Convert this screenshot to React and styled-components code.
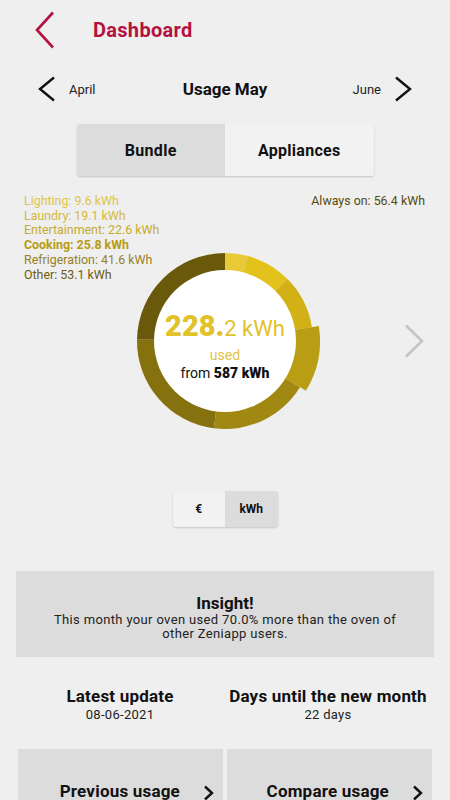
import React, { useState } from "react";
import styled, { createGlobalStyle } from "styled-components";

const GlobalStyle = createGlobalStyle`
  html, body {
    margin: 0;
    padding: 0;
    background: #efefef;
  }
  body {
    font-family: Roboto, "Liberation Sans", sans-serif;
    color: #111;
  }
`;

const segments = [
  { label: "Lighting", value: 9.6, color: "#e8ca36", text: "#e0c545" },
  { label: "Laundry", value: 19.1, color: "#e3c21b", text: "#d6b938" },
  { label: "Entertainment", value: 22.6, color: "#d2b116", text: "#c6ab2e" },
  { label: "Cooking", value: 25.8, color: "#b99d13", text: "#b89b12", active: true },
  { label: "Refrigeration", value: 41.6, color: "#a08812", text: "#968125" },
  { label: "Other", value: 53.1, color: "#85710e", text: "#6c5c14" },
  { label: "Always on", value: 56.4, color: "#6a590b", text: "#574a0e" },
];

const total = segments.reduce((s, x) => s + x.value, 0);

// point on circle, angle measured clockwise from 12 o'clock
const polar = (r, a) => [100 + r * Math.sin(a), 100 - r * Math.cos(a)];

const arcPath = (a0, a1, ro, ri) => {
  const large = a1 - a0 > Math.PI ? 1 : 0;
  const [x0, y0] = polar(ro, a0);
  const [x1, y1] = polar(ro, a1);
  const [x2, y2] = polar(ri, a1);
  const [x3, y3] = polar(ri, a0);
  return `M${x0} ${y0} A${ro} ${ro} 0 ${large} 1 ${x1} ${y1} L${x2} ${y2} A${ri} ${ri} 0 ${large} 0 ${x3} ${y3} Z`;
};

function Donut() {
  let acc = 0;
  return (
    <svg width="200" height="200" viewBox="0 0 200 200">
      {segments.map((s) => {
        const a0 = (acc / total) * Math.PI * 2;
        acc += s.value;
        const a1 = (acc / total) * Math.PI * 2;
        return (
          <path
            key={s.label}
            d={arcPath(a0, a1, s.active ? 95 : 88, 70)}
            fill={s.color}
          />
        );
      })}
      <circle cx="100" cy="100" r="71" fill="#fff" />
    </svg>
  );
}

const Chevron = ({ dir = "left", color = "#111", w = 18, h = 26, stroke = 2.4 }) => (
  <svg width={w} height={h} viewBox={`0 0 ${w} ${h}`} fill="none">
    {dir === "left" ? (
      <polyline
        points={`${w - 2},1.5 2,${h / 2} ${w - 2},${h - 1.5}`}
        stroke={color}
        strokeWidth={stroke}
      />
    ) : (
      <polyline
        points={`2,1.5 ${w - 2},${h / 2} 2,${h - 1.5}`}
        stroke={color}
        strokeWidth={stroke}
      />
    )}
  </svg>
);

export default function App() {
  const [tab, setTab] = useState("bundle");
  const [unit, setUnit] = useState("kwh");
  const always = segments[segments.length - 1];

  return (
    <Page>
      <GlobalStyle />
      <Header>
        <BackButton>
          <Chevron dir="left" color="#b3123f" w={20} h={38} stroke={2.6} />
        </BackButton>
        <Title>Dashboard</Title>
      </Header>

      <MonthNav>
        <MonthLink>
          <Chevron dir="left" />
          <span>April</span>
        </MonthLink>
        <MonthTitle>Usage May</MonthTitle>
        <MonthLink $right>
          <span>June</span>
          <Chevron dir="right" />
        </MonthLink>
      </MonthNav>

      <Tabs>
        <Tab $active={tab === "bundle"} onClick={() => setTab("bundle")}>
          Bundle
        </Tab>
        <Tab $active={tab === "appliances"} onClick={() => setTab("appliances")}>
          Appliances
        </Tab>
      </Tabs>

      <ChartStage>
        <LegendRow>
          <Legend>
            {segments.slice(0, -1).map((s) => (
              <LegendItem key={s.label} $color={s.text} $bold={s.active}>
                {s.label}: {s.value} kWh
              </LegendItem>
            ))}
          </Legend>
          <LegendItem $color={always.text}>
            {always.label}: {always.value} kWh
          </LegendItem>
        </LegendRow>

        <DonutRow>
          <span />
          <DonutWrap>
            <Donut />
            <CenterText>
              <Amount>
                <b>228.</b>2 kWh
              </Amount>
              <Used>used</Used>
              <From>
                from <b>587 kWh</b>
              </From>
            </CenterText>
          </DonutWrap>
          <NextChart>
            <Chevron dir="right" color="#c4c4c4" w={20} h={34} stroke={2.6} />
          </NextChart>
        </DonutRow>
      </ChartStage>

      <UnitToggle>
        <UnitOption $active={unit === "eur"} onClick={() => setUnit("eur")}>
          €
        </UnitOption>
        <UnitOption $active={unit === "kwh"} onClick={() => setUnit("kwh")}>
          kWh
        </UnitOption>
      </UnitToggle>

      <Insight>
        <h3>Insight!</h3>
        <p>
          This month your oven used 70.0% more than the oven of
          <br />
          other Zeniapp users.
        </p>
      </Insight>

      <Stats>
        <Stat>
          <h4>Latest update</h4>
          <span>08-06-2021</span>
        </Stat>
        <Stat>
          <h4>Days until the new month</h4>
          <span>22 days</span>
        </Stat>
      </Stats>

      <Actions>
        <ActionButton>
          Previous usage
          <Chevron dir="right" w={11} h={16} stroke={2.4} />
        </ActionButton>
        <ActionButton>
          Compare usage
          <Chevron dir="right" w={11} h={16} stroke={2.4} />
        </ActionButton>
      </Actions>
    </Page>
  );
}

const Page = styled.div`
  width: 450px;
  height: 800px;
  overflow: hidden;
  background: #efefef;
  display: flex;
  flex-direction: column;

  & > * {
    flex-shrink: 0;
  }
`;

const Header = styled.header`
  height: 60px;
  display: flex;
  align-items: center;
  padding-left: 35px;
  box-sizing: border-box;
`;

const BackButton = styled.div`
  display: flex;
  width: 58px;
`;

const Title = styled.h1`
  margin: 0;
  font-size: 20px;
  font-weight: 700;
  color: #b3123f;
  letter-spacing: 0.3px;
`;

const MonthNav = styled.nav`
  height: 58px;
  display: grid;
  grid-template-columns: 1fr auto 1fr;
  align-items: center;
  padding: 0 38px;
  box-sizing: border-box;
`;

const MonthLink = styled.div`
  display: flex;
  align-items: center;
  gap: 13px;
  justify-self: ${(p) => (p.$right ? "end" : "start")};
  font-size: 13px;
  color: #222;
`;

const MonthTitle = styled.h2`
  margin: 0;
  font-size: 17px;
  font-weight: 700;
  color: #111;
`;

const Tabs = styled.div`
  align-self: center;
  margin-top: 6px;
  width: 297px;
  height: 52px;
  display: flex;
  border-radius: 3px;
  overflow: hidden;
  box-shadow: 0 1px 2px rgba(0, 0, 0, 0.18);
`;

const Tab = styled.button`
  flex: 1;
  border: none;
  background: ${(p) => (p.$active ? "#dcdcdc" : "#f2f2f2")};
  font-family: inherit;
  font-size: 16px;
  font-weight: 700;
  letter-spacing: 0.3px;
  color: #111;
  cursor: pointer;
`;

const ChartStage = styled.section`
  margin-top: 18px;
  display: grid;
  grid-template-areas: "stage";
`;

const LegendRow = styled.div`
  grid-area: stage;
  align-self: start;
  display: flex;
  justify-content: space-between;
  align-items: flex-start;
  padding: 0 25px 0 24px;
  z-index: 1;
`;

const Legend = styled.div`
  display: flex;
  flex-direction: column;
`;

const LegendItem = styled.div`
  font-size: 12.4px;
  line-height: 14.7px;
  color: ${(p) => p.$color};
  font-weight: ${(p) => (p.$bold ? 700 : 400)};
`;

const DonutRow = styled.div`
  grid-area: stage;
  margin-top: 47px;
  display: grid;
  grid-template-columns: 1fr 200px 1fr;
  align-items: center;
`;

const DonutWrap = styled.div`
  position: relative;
  width: 200px;
  height: 200px;

  svg {
    display: block;
  }
`;

const CenterText = styled.div`
  position: absolute;
  inset: 0;
  display: flex;
  flex-direction: column;
  align-items: center;
  justify-content: center;
  padding-top: 8px;
`;

const Amount = styled.div`
  font-size: 22px;
  color: #e2c22a;
  line-height: 32px;

  b {
    font-size: 29px;
    font-weight: 900;
  }
`;

const Used = styled.div`
  margin-top: 2px;
  font-size: 14px;
  color: #e0c447;
`;

const From = styled.div`
  font-size: 14px;
  color: #111;
  margin-top: 2px;

  b {
    font-weight: 900;
  }
`;

const NextChart = styled.div`
  justify-self: end;
  display: flex;
  padding-right: 26px;
`;

const UnitToggle = styled.div`
  align-self: center;
  margin-top: 50px;
  width: 105px;
  height: 36px;
  display: flex;
  border-radius: 3px;
  overflow: hidden;
  box-shadow: 0 1px 2px rgba(0, 0, 0, 0.18);
`;

const UnitOption = styled.button`
  flex: 1;
  border: none;
  background: ${(p) => (p.$active ? "#dcdcdc" : "#f2f2f2")};
  font-family: inherit;
  font-size: 12px;
  font-weight: 700;
  color: #111;
  cursor: pointer;
`;

const Insight = styled.section`
  margin: 44px 16px 0;
  height: 86px;
  box-sizing: border-box;
  padding-top: 6px;
  background: #dcdcdc;
  display: flex;
  flex-direction: column;
  align-items: center;
  justify-content: center;
  text-align: center;

  h3 {
    margin: 0;
    font-size: 17px;
    font-weight: 700;
    line-height: 20px;
  }

  p {
    margin: 0;
    font-size: 13px;
    letter-spacing: 0.35px;
    line-height: 14.5px;
    color: #222;
  }
`;

const Stats = styled.section`
  margin-top: 28px;
  display: grid;
  grid-template-columns: 240px minmax(0, 1fr);
  padding-right: 34px;
`;

const Stat = styled.div`
  display: flex;
  flex-direction: column;
  align-items: center;
  min-width: 0;

  h4 {
    margin: 0;
    font-size: 17px;
    font-weight: 700;
    letter-spacing: 0.2px;
    line-height: 22px;
    white-space: nowrap;
  }

  span {
    font-size: 13px;
    letter-spacing: 0.3px;
    line-height: 15px;
    color: #222;
  }
`;

const Actions = styled.section`
  margin-top: 27px;
  display: grid;
  grid-template-columns: 1fr 1fr;
  gap: 4px;
  padding: 0 18px;
`;

const ActionButton = styled.button`
  height: 80px;
  border: none;
  background: #dcdcdc;
  font-family: inherit;
  font-size: 17px;
  font-weight: 700;
  letter-spacing: 0.2px;
  color: #111;
  display: flex;
  align-items: flex-start;
  justify-content: flex-end;
  gap: 23px;
  padding: 32px 9px 0 0;

  svg {
    margin-top: 4px;
  }
`;
